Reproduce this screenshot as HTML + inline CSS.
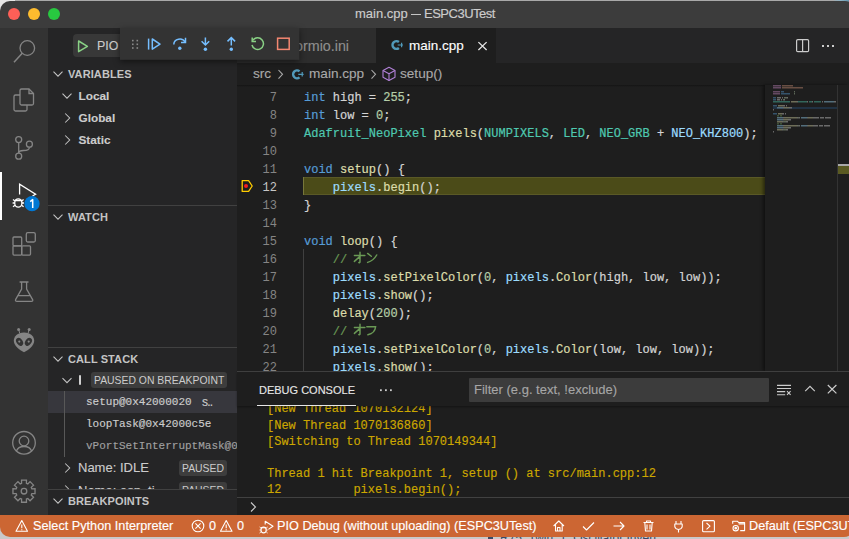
<!DOCTYPE html><html><head><meta charset="utf-8"><style>
*{margin:0;padding:0;box-sizing:border-box}
html,body{width:849px;height:539px;overflow:hidden;background:#c9c9c9;font-family:"Liberation Sans",sans-serif;position:relative}
div{position:absolute;white-space:pre}
span{white-space:pre}
.mono{font-family:"Liberation Mono",monospace}
.tl{top:8px;width:12px;height:12px;border-radius:50%}
.sh{left:48px;width:189px;height:22px;color:#c4c4c4;font-weight:bold;font-size:11px;line-height:22px;padding-left:20px;letter-spacing:0.1px}
.sep{left:48px;width:189px;height:1px;background:#414141}
.row{height:22px;color:#cccccc;font-size:13px;line-height:22px;-webkit-text-stroke:0.12px currentColor}
.mono{-webkit-text-stroke:0.15px currentColor}
.code{left:304px;height:18px;font-family:"Liberation Mono",monospace;font-size:12px;line-height:18px;color:#d4d4d4;-webkit-text-stroke:0.2px currentColor}
.ln{left:237px;width:40px;text-align:right;height:18px;font-family:"Liberation Mono",monospace;font-size:12px;line-height:18px;color:#858585}
.k{color:#569cd6}.n{color:#b5cea8}.t{color:#4ec9b0}.f{color:#dcdcaa}.v{color:#9cdcfe}.c{color:#6a9955}
.cl{left:267px;height:16px;font-family:"Liberation Mono",monospace;font-size:12px;line-height:16px;color:#cca700;-webkit-text-stroke:0.15px currentColor}
.si{top:515px;height:22px;line-height:22px;color:#fff;font-size:12.7px;-webkit-text-stroke:0.15px currentColor}
.badge{height:16px;border-radius:3px;background:#3d3d3d;color:#cccccc;font-size:10.4px;line-height:17.5px;padding:0 3px}
svg{position:absolute;left:0;top:0}
</style></head><body>
<div style="left:0;top:0;width:849px;height:2px;background:#a9a9a9"></div>
<div style="left:834px;top:0;width:15px;height:15px;background:linear-gradient(225deg,#5f93ad 0,#8fb3c4 30%,#a9a9a9 60%)"></div>
<div style="left:0;top:0;width:15px;height:15px;background:#e6e6e6"></div>
<div style="left:0;top:1px;width:855px;height:27px;background:#3c3c3c;border-radius:10px 10px 0 0"></div>
<div class="tl" style="left:8px;background:#fe5f57"></div><div class="tl" style="left:28px;background:#febc2e"></div><div class="tl" style="left:48px;background:#28c840"></div>
<div style="left:355px;top:6px;color:#cccccc;font-size:13px;line-height:15px;-webkit-text-stroke:0.15px currentColor">main.cpp</div>
<div style="left:411px;top:13.6px;width:9.6px;height:1.1px;background:#c4c4c4"></div>
<div style="left:424px;top:6px;color:#cccccc;font-size:13px;line-height:15px;letter-spacing:-0.5px;-webkit-text-stroke:0.15px currentColor">ESPC3UTest</div>
<div style="left:0;top:28px;width:48px;height:487px;background:#333333"></div>
<div style="left:0;top:172px;width:2px;height:48px;background:#ffffff"></div>
<div style="left:48px;top:28px;width:189px;height:487px;background:#252526"></div>
<div style="left:73px;top:34px;width:160px;height:23px;border-radius:4px;background:#383838"></div>
<div class="row" style="left:97px;top:35px;font-size:12.4px">PIO Debug</div>
<div class="sh" style="top:63px">VARIABLES</div>
<div class="row" style="top:85.2px;left:78.5px;font-weight:bold;font-size:11.8px">Local</div>
<div class="row" style="top:107.2px;left:78.5px;font-weight:bold;font-size:11.8px">Global</div>
<div class="row" style="top:129.2px;left:78.5px;font-weight:bold;font-size:11.8px">Static</div>
<div class="sep" style="top:205px"></div>
<div class="sh" style="top:206px">WATCH</div>
<div class="sep" style="top:347px"></div>
<div class="sh" style="top:348px">CALL STACK</div>
<div style="top:375.4px;left:79px;width:2px;height:9.4px;background:#d0d0d0;border-radius:1px"></div>
<div class="badge" style="left:91px;top:372px">PAUSED ON BREAKPOINT</div>
<div style="left:48px;top:391px;width:189px;height:22px;background:#37373d"></div>
<div style="left:64px;top:391px;width:1px;height:66px;background:#585858"></div>
<div class="row mono" style="top:391px;left:86px;font-size:11px">setup@0x42000020</div>
<div class="row" style="top:391px;left:202px;font-size:12px;letter-spacing:-0.8px">s..</div>
<div class="row mono" style="top:413px;left:86px;font-size:11px">loopTask@0x42000c5e</div>
<div style="left:48px;top:435px;width:189px;height:22px;overflow:hidden"><div class="row mono" style="top:0;left:38px;font-size:11px;color:#a0a0a0">vPortSetInterruptMask@0x4</div></div>
<div class="row" style="top:457px;left:78px">Name: IDLE</div>
<div class="badge" style="left:179px;top:460px">PAUSED</div>
<div class="row" style="top:480px;left:78px">Name: esp_ti..</div>
<div class="badge" style="left:179px;top:482px">PAUSED</div>
<div style="left:48px;top:489px;width:189px;height:26px;background:#252526"></div>
<div class="sep" style="top:489px"></div>
<div class="sh" style="top:490px">BREAKPOINTS</div>
<div style="left:237px;top:28px;width:612px;height:343px;background:#1e1e1e"></div>
<div style="left:237px;top:28px;width:612px;height:35px;background:#252526"></div>
<div style="left:237px;top:28px;width:139px;height:35px;background:#2d2d2d"></div>
<div class="row" style="left:268px;top:34.5px;color:#8f8f8f;font-size:14.3px">platformio.ini</div>
<div style="left:376px;top:28px;width:120px;height:35px;background:#1e1e1e"></div>
<div class="row" style="left:409px;top:35px;color:#ffffff;font-size:13.5px">main.cpp</div>
<div class="row" style="left:253px;top:63px;color:#a9a9a9;font-size:13.6px">src</div>
<div class="row" style="left:309px;top:63px;color:#a9a9a9;font-size:13.6px">main.cpp</div>
<div class="row" style="left:400px;top:63px;color:#a9a9a9;font-size:13.6px">setup()</div>
<div style="left:237px;top:85px;width:612px;height:2px;background:linear-gradient(#141414,#1e1e1e)"></div>
<div style="left:303px;top:177px;width:462px;height:18px;background:#4b4b18;border-top:1px solid #5a5926;border-bottom:1px solid #5a5926"></div>
<div style="left:303px;top:177px;width:1px;height:18px;background:#77773a"></div>
<div style="left:303px;top:249px;width:1px;height:122px;background:#404040"></div>
<div style="left:237px;top:85px;width:528px;height:286px;overflow:hidden">
<div class="ln" style="left:0;top:4px">7</div>
<div class="code" style="left:67px;top:4px"><span class="k">int</span> high = <span class="n">255</span>;</div>
<div class="ln" style="left:0;top:22px">8</div>
<div class="code" style="left:67px;top:22px"><span class="k">int</span> low = <span class="n">0</span>;</div>
<div class="ln" style="left:0;top:40px">9</div>
<div class="code" style="left:67px;top:40px"><span class="t">Adafruit_NeoPixel</span> <span class="f">pixels</span>(<span class="t">NUMPIXELS</span>, <span class="t">LED</span>, <span class="t">NEO_GRB</span> + <span class="v">NEO_KHZ800</span>);</div>
<div class="ln" style="left:0;top:58px">10</div>
<div class="ln" style="left:0;top:76px">11</div>
<div class="code" style="left:67px;top:76px"><span class="k">void</span> <span class="f">setup</span>() {</div>
<div class="ln" style="left:0;top:94px;color:#c6c6c6">12</div>
<div class="code" style="left:67px;top:94px">    <span class="v">pixels</span>.<span class="f">begin</span>();</div>
<div class="ln" style="left:0;top:112px">13</div>
<div class="code" style="left:67px;top:112px">}</div>
<div class="ln" style="left:0;top:130px">14</div>
<div class="ln" style="left:0;top:148px">15</div>
<div class="code" style="left:67px;top:148px"><span class="k">void</span> <span class="f">loop</span>() {</div>
<div class="ln" style="left:0;top:166px">16</div>
<div class="code" style="left:67px;top:166px">    <span class="c">//</span></div>
<div class="ln" style="left:0;top:184px">17</div>
<div class="code" style="left:67px;top:184px">    <span class="v">pixels</span>.<span class="f">setPixelColor</span>(<span class="n">0</span>, <span class="v">pixels</span>.<span class="f">Color</span>(high, low, low));</div>
<div class="ln" style="left:0;top:202px">18</div>
<div class="code" style="left:67px;top:202px">    <span class="v">pixels</span>.<span class="f">show</span>();</div>
<div class="ln" style="left:0;top:220px">19</div>
<div class="code" style="left:67px;top:220px">    <span class="f">delay</span>(<span class="n">200</span>);</div>
<div class="ln" style="left:0;top:238px">20</div>
<div class="code" style="left:67px;top:238px">    <span class="c">//</span></div>
<div class="ln" style="left:0;top:256px">21</div>
<div class="code" style="left:67px;top:256px">    <span class="v">pixels</span>.<span class="f">setPixelColor</span>(<span class="n">0</span>, <span class="v">pixels</span>.<span class="f">Color</span>(low, low, low));</div>
<div class="ln" style="left:0;top:274px">22</div>
<div class="code" style="left:67px;top:274px">    <span class="v">pixels</span>.<span class="f">show</span>();</div>
</div>
<div style="left:765px;top:85px;width:84px;height:286px;background:#1e1e1e;box-shadow:-2px 0 3px rgba(0,0,0,.45)"></div>
<div style="left:837px;top:85px;width:1px;height:286px;background:#333333"></div>
<div style="left:838px;top:164px;width:11px;height:2px;background:#a8a8a8"></div>
<div style="left:838px;top:166px;width:11px;height:8px;background:#5a5a22"></div>
<div style="left:237px;top:371px;width:612px;height:144px;background:#1e1e1e"></div>
<div style="left:237px;top:371px;width:612px;height:1px;background:#414141"></div>
<div class="cl" style="top:401px">[New Thread 1070132124]</div>
<div class="cl" style="top:418px">[New Thread 1070136860]</div>
<div class="cl" style="top:434px">[Switching to Thread 1070149344]</div>
<div class="cl" style="top:466px">Thread 1 hit Breakpoint 1, setup () at src/main.cpp:12</div>
<div class="cl" style="top:482px">12          pixels.begin();</div>
<div style="left:237px;top:372px;width:612px;height:34px;background:#1e1e1e;box-shadow:0 1px 2px rgba(0,0,0,.35)"></div>
<div class="row" style="left:259px;top:379px;font-size:11px;color:#e7e7e7">DEBUG CONSOLE</div>
<div style="left:257px;top:405px;width:99px;height:1px;background:#e7e7e7"></div>
<div style="left:469px;top:378px;width:300px;height:24px;background:#3c3c3c;border-radius:1px"></div>
<div class="row" style="left:474px;top:379px;color:#a6a6a6">Filter (e.g. text, !exclude)</div>
<div style="left:237px;top:497px;width:612px;height:1px;background:#414141"></div>
<div style="left:486px;top:531px;width:200px;height:8px;overflow:hidden"><div style="left:2px;top:5px;width:5px;height:5px;background:#3a4a66"></div><div style="left:14px;top:0;color:#3a4a66;font-size:12px;line-height:14px">R75  Twin  1  Oscillator Invert</div></div>
<div style="left:0;top:515px;width:854px;height:22px;background:#cc6633;border-radius:0 0 10px 10px"></div>
<div class="si" style="left:33px">Select Python Interpreter</div>
<div class="si" style="left:209px">0</div>
<div class="si" style="left:237px">0</div>
<div class="si" style="left:277px">PIO Debug (without uploading) (ESPC3UTest)</div>
<div class="si" style="left:749px">Default (ESPC3UTest)</div>
<svg width="849" height="539" viewBox="0 0 849 539"><g fill="none" stroke="#858585" stroke-width="1.3"><circle cx="27.3" cy="48" r="7.3"/><line x1="22.2" y1="53.3" x2="14" y2="62.3" stroke-width="1.5"/><path d="M20 90.5 Q20 89 21.5 89 H29 L33.5 93.5 V103.5 Q33.5 105 32 105 H21.5 Q20 105 20 103.5 Z"/><path d="M29 89 V93.5 H33.5"/><path d="M20 95 H15.5 Q14 95 14 96.5 V109.5 Q14 111 15.5 111 H25.5 Q27 111 27 109.5 V105"/><circle cx="18.7" cy="139.6" r="3"/><circle cx="18.7" cy="156.2" r="3"/><circle cx="29.4" cy="144.2" r="3"/><path d="M18.7 142.6 V153.2"/><path d="M29.4 147.2 C29.4 150 27 150.5 23.5 150.5 C20.5 150.5 18.7 151.5 18.7 153"/><rect x="13" y="237" width="8.7" height="8.8" rx="1"/><rect x="13" y="245.8" width="8.7" height="9.3" rx="1"/><rect x="21.7" y="245.8" width="8.8" height="9.3" rx="1"/><rect x="26.3" y="232.7" width="9" height="9.3" rx="1.5"/><path d="M19.6 282 H28.5 M21.6 282 V289 L15.6 299.6 Q15 301.4 17 301.4 H31.4 Q33.3 301.4 32.6 299.6 L26.6 289 V282 M17.8 295.6 H30.4"/><circle cx="24" cy="442.8" r="11.3"/><circle cx="24" cy="441" r="4.8"/><path d="M16.3 451.3 C17.5 447.8 20.5 446.5 24 446.5 C27.5 446.5 30.5 447.8 31.7 451.3"/><path d="M31.83 488.78 L35.03 488.73 L35.03 493.67 L31.83 493.62 L31.25 495.03 L33.54 497.25 L30.05 500.74 L27.83 498.45 L26.42 499.03 L26.47 502.23 L21.53 502.23 L21.58 499.03 L20.17 498.45 L17.95 500.74 L14.46 497.25 L16.75 495.03 L16.17 493.62 L12.97 493.67 L12.97 488.73 L16.17 488.78 L16.75 487.37 L14.46 485.15 L17.95 481.66 L20.17 483.95 L21.58 483.37 L21.53 480.17 L26.47 480.17 L26.42 483.37 L27.83 483.95 L30.05 481.66 L33.54 485.15 L31.25 487.37 Z"/><circle cx="24" cy="491.2" r="2.8"/></g><g fill="#858585"><path d="M24 332.4 C30.5 332.4 34.2 336.2 34.2 340.8 C34.2 345.8 28.5 350 24 352.2 C19.5 350 13.8 345.8 13.8 340.8 C13.8 336.2 17.5 332.4 24 332.4 Z"/><circle cx="18.6" cy="329.4" r="1.5"/><circle cx="29.2" cy="329.4" r="1.5"/></g><g stroke="#858585" stroke-width="1"><line x1="18.8" y1="330" x2="19.8" y2="333.5"/><line x1="29" y1="330" x2="28" y2="333.5"/></g><g fill="#333333"><ellipse cx="19.6" cy="341.8" rx="3" ry="4.4" transform="rotate(-35 19.6 341.8)"/><ellipse cx="28.4" cy="341.8" rx="3" ry="4.4" transform="rotate(35 28.4 341.8)"/></g><g fill="#858585"><circle cx="19.3" cy="341.6" r="1.1"/><circle cx="28.7" cy="341.6" r="1.1"/></g><g fill="none" stroke="#ffffff" stroke-width="1.3"><path d="M19.6 194.5 V184.2 L35.6 194.2 L32.5 196"/><ellipse cx="18.3" cy="203" rx="3.6" ry="4.2"/><path d="M15 200.5 H21.6 M13 199.5 L15 201 M23.6 199.5 L21.6 201 M12.6 203 H14.7 M21.9 203 H24 M13 206.8 L15 205.2 M23.6 206.8 L21.6 205.2"/></g><circle cx="32" cy="203.7" r="7.6" fill="#0078d4"/><path d="M30.2 201.6 L32.7 199.6 V208" fill="none" stroke="#fff" stroke-width="1.5" stroke-linejoin="round"/><polyline points="53.5 71.7 58.0 76.2 62.5 71.7" fill="none" stroke="#c5c5c5" stroke-width="1.05"/><polyline points="53.5 214.7 58.0 219.2 62.5 214.7" fill="none" stroke="#c5c5c5" stroke-width="1.05"/><polyline points="53.5 356.7 58.0 361.2 62.5 356.7" fill="none" stroke="#c5c5c5" stroke-width="1.05"/><polyline points="53.5 498.7 58.0 503.2 62.5 498.7" fill="none" stroke="#c5c5c5" stroke-width="1.05"/><polyline points="62.5 93.7 67.0 98.2 71.5 93.7" fill="none" stroke="#c5c5c5" stroke-width="1.05"/><polyline points="65.2 113.5 69.7 118.0 65.2 122.5" fill="none" stroke="#c5c5c5" stroke-width="1.05"/><polyline points="65.2 135.5 69.7 140.0 65.2 144.5" fill="none" stroke="#c5c5c5" stroke-width="1.05"/><polyline points="62.5 378.2 67.0 382.7 71.5 378.2" fill="none" stroke="#c5c5c5" stroke-width="1.05"/><polyline points="65.2 463.5 69.7 468.0 65.2 472.5" fill="none" stroke="#c5c5c5" stroke-width="1.05"/><polyline points="65.2 485.5 68.7 489" fill="none" stroke="#c5c5c5" stroke-width="1.05"/><path d="M78.6 41 L87.4 46.3 L78.6 51.6 Z" fill="none" stroke="#89d185" stroke-width="1.5" stroke-linejoin="round"/><rect x="120" y="28" width="179.3" height="31.8" fill="#333333" style="filter:drop-shadow(0 2px 3px rgba(0,0,0,.5))"/><g fill="#8a8a8a"><rect x="132.0" y="39.8" width="1.6" height="1.6"/><rect x="132.0" y="43.5" width="1.6" height="1.6"/><rect x="132.0" y="47.2" width="1.6" height="1.6"/><rect x="136.5" y="39.8" width="1.6" height="1.6"/><rect x="136.5" y="43.5" width="1.6" height="1.6"/><rect x="136.5" y="47.2" width="1.6" height="1.6"/></g><g fill="none" stroke="#75beff" stroke-width="1.5"><path d="M148.6 38.6 V49.6"/><path d="M152.3 39 L160 44.1 L152.3 49.2 Z" stroke-linejoin="round"/><path d="M173.8 44.5 A6 5.5 0 0 1 185.2 42.2"/><path d="M185.5 37.8 V42.6 H181"/><path d="M205.4 37.6 V44.6 M201.6 41.2 L205.4 45 L209.2 41.2"/><path d="M231.3 45.4 V38 M227.5 41.4 L231.3 37.6 L235.1 41.4"/></g><g fill="#75beff"><circle cx="179.8" cy="48.2" r="1.7"/><circle cx="205.4" cy="49.2" r="1.7"/><circle cx="231.3" cy="49.2" r="1.7"/></g><path d="M253 40.2 A5.8 5.8 0 1 1 252 45" fill="none" stroke="#89d185" stroke-width="1.5"/><path d="M252.2 37.6 V41.4 H256" fill="none" stroke="#89d185" stroke-width="1.5"/><rect x="277.6" y="38.2" width="11.6" height="11.2" fill="none" stroke="#f48771" stroke-width="1.5"/><g transform="translate(396.4 45.0)"><path d="M2.5 -3 A3.9 3.9 0 1 0 2.5 3" fill="none" stroke="#519aba" stroke-width="2.4"/><path d="M1.3 0 H6.6 M5.2 -2.3 V2.3" stroke="#519aba" stroke-width="1.2"/></g><path d="M478.4 42.1 L486.6 50 M486.6 42.1 L478.4 50" stroke="#e6e6e6" stroke-width="1.3"/><rect x="796.6" y="39.6" width="12" height="12" rx="1.2" fill="none" stroke="#cccccc" stroke-width="1.2"/><line x1="802.6" y1="39.6" x2="802.6" y2="51.6" stroke="#cccccc" stroke-width="1.2"/><g fill="#cccccc"><rect x="822" y="45" width="2" height="2"/><rect x="827" y="45" width="2" height="2"/><rect x="832" y="45" width="2" height="2"/></g><polyline points="278.5 70 282.5 74.3 278.5 78.6" fill="none" stroke="#a9a9a9" stroke-width="1.1"/><g transform="translate(297.0 74.3)"><path d="M2.5 -3 A3.9 3.9 0 1 0 2.5 3" fill="none" stroke="#519aba" stroke-width="2.4"/><path d="M1.3 0 H6.6 M5.2 -2.3 V2.3" stroke="#519aba" stroke-width="1.2"/></g><polyline points="371.5 70 375.5 74.3 371.5 78.6" fill="none" stroke="#a9a9a9" stroke-width="1.1"/><g fill="none" stroke="#b180d7" stroke-width="1.1" stroke-linejoin="round"><path d="M389 67.3 L395 70.5 V77.3 L389 80.4 L383 77.3 V70.5 Z"/><path d="M383 70.5 L389 73.7 L395 70.5 M389 73.7 V80.4"/></g><path d="M242.2 180.6 H248.6 L252.2 186 L248.6 191.4 H242.2 Z" fill="none" stroke="#ffcc00" stroke-width="1.3" stroke-linejoin="round"/><circle cx="246" cy="186" r="2" fill="#f51d1d"/><path d="M354.4 255.4 H364.9 M360 252.3 V262.1 Q360 263.0 358.8 262.5 M359.7 256.6 L354.4 261.4 M367.6 253.4 L371.3 256.3 M367.6 262.4 Q373.6 260.6 376.7 255.0" fill="none" stroke="#6a9955" stroke-width="1.45" stroke-linecap="round"/><path d="M354.4 327.4 H364.9 M360 324.3 V334.1 Q360 335.0 358.8 334.5 M359.7 328.6 L354.4 333.4 M366.8 326.8 H375.6 Q375 333.2 367.9 334.8" fill="none" stroke="#6a9955" stroke-width="1.45" stroke-linecap="round"/><g opacity="0.42"><rect x="773" y="107" width="64" height="2" fill="#264f78"/><rect x="773" y="85" width="8" height="1.5" fill="#c586c0"/><rect x="782" y="85" width="11" height="1.5" fill="#ce9178"/><rect x="773" y="87" width="8" height="1.5" fill="#c586c0"/><rect x="782" y="87" width="21" height="1.5" fill="#ce9178"/><rect x="773" y="91" width="7" height="1.5" fill="#c586c0"/><rect x="781" y="91" width="3" height="1.5" fill="#569cd6"/><rect x="794" y="91" width="1" height="1.5" fill="#b5cea8"/><rect x="773" y="93" width="7" height="1.5" fill="#c586c0"/><rect x="781" y="93" width="9" height="1.5" fill="#569cd6"/><rect x="794" y="93" width="1" height="1.5" fill="#b5cea8"/><rect x="773" y="97" width="3" height="1.5" fill="#569cd6"/><rect x="777" y="97" width="4" height="1.5" fill="#d4d4d4"/><rect x="782" y="97" width="1" height="1.5" fill="#d4d4d4"/><rect x="784" y="97" width="3" height="1.5" fill="#b5cea8"/><rect x="787" y="97" width="1" height="1.5" fill="#d4d4d4"/><rect x="773" y="99" width="3" height="1.5" fill="#569cd6"/><rect x="777" y="99" width="3" height="1.5" fill="#d4d4d4"/><rect x="781" y="99" width="1" height="1.5" fill="#d4d4d4"/><rect x="783" y="99" width="1" height="1.5" fill="#b5cea8"/><rect x="784" y="99" width="1" height="1.5" fill="#d4d4d4"/><rect x="773" y="101" width="17" height="1.5" fill="#4ec9b0"/><rect x="791" y="101" width="6" height="1.5" fill="#dcdcaa"/><rect x="797" y="101" width="1" height="1.5" fill="#d4d4d4"/><rect x="798" y="101" width="9" height="1.5" fill="#4ec9b0"/><rect x="807" y="101" width="1" height="1.5" fill="#d4d4d4"/><rect x="809" y="101" width="3" height="1.5" fill="#4ec9b0"/><rect x="812" y="101" width="1" height="1.5" fill="#d4d4d4"/><rect x="814" y="101" width="7" height="1.5" fill="#4ec9b0"/><rect x="822" y="101" width="1" height="1.5" fill="#d4d4d4"/><rect x="824" y="101" width="10" height="1.5" fill="#9cdcfe"/><rect x="834" y="101" width="2" height="1.5" fill="#d4d4d4"/><rect x="773" y="105" width="4" height="1.5" fill="#569cd6"/><rect x="778" y="105" width="5" height="1.5" fill="#dcdcaa"/><rect x="783" y="105" width="2" height="1.5" fill="#d4d4d4"/><rect x="786" y="105" width="1" height="1.5" fill="#d4d4d4"/><rect x="777" y="107" width="6" height="1.5" fill="#9cdcfe"/><rect x="783" y="107" width="1" height="1.5" fill="#d4d4d4"/><rect x="784" y="107" width="5" height="1.5" fill="#dcdcaa"/><rect x="789" y="107" width="3" height="1.5" fill="#d4d4d4"/><rect x="773" y="109" width="1" height="1.5" fill="#d4d4d4"/><rect x="773" y="113" width="4" height="1.5" fill="#569cd6"/><rect x="778" y="113" width="4" height="1.5" fill="#dcdcaa"/><rect x="782" y="113" width="2" height="1.5" fill="#d4d4d4"/><rect x="785" y="113" width="1" height="1.5" fill="#d4d4d4"/><rect x="777" y="115" width="2" height="1.5" fill="#6a9955"/><rect x="780" y="115" width="2" height="1.5" fill="#6a9955"/><rect x="777" y="117" width="6" height="1.5" fill="#9cdcfe"/><rect x="783" y="117" width="1" height="1.5" fill="#d4d4d4"/><rect x="784" y="117" width="13" height="1.5" fill="#dcdcaa"/><rect x="797" y="117" width="1" height="1.5" fill="#d4d4d4"/><rect x="798" y="117" width="1" height="1.5" fill="#b5cea8"/><rect x="799" y="117" width="1" height="1.5" fill="#d4d4d4"/><rect x="801" y="117" width="6" height="1.5" fill="#9cdcfe"/><rect x="807" y="117" width="1" height="1.5" fill="#d4d4d4"/><rect x="808" y="117" width="5" height="1.5" fill="#dcdcaa"/><rect x="813" y="117" width="6" height="1.5" fill="#d4d4d4"/><rect x="820" y="117" width="4" height="1.5" fill="#d4d4d4"/><rect x="825" y="117" width="6" height="1.5" fill="#d4d4d4"/><rect x="777" y="119" width="6" height="1.5" fill="#9cdcfe"/><rect x="783" y="119" width="1" height="1.5" fill="#d4d4d4"/><rect x="784" y="119" width="4" height="1.5" fill="#dcdcaa"/><rect x="788" y="119" width="3" height="1.5" fill="#d4d4d4"/><rect x="777" y="121" width="5" height="1.5" fill="#dcdcaa"/><rect x="782" y="121" width="1" height="1.5" fill="#d4d4d4"/><rect x="783" y="121" width="3" height="1.5" fill="#b5cea8"/><rect x="786" y="121" width="2" height="1.5" fill="#d4d4d4"/><rect x="777" y="123" width="2" height="1.5" fill="#6a9955"/><rect x="780" y="123" width="2" height="1.5" fill="#6a9955"/><rect x="777" y="125" width="6" height="1.5" fill="#9cdcfe"/><rect x="783" y="125" width="1" height="1.5" fill="#d4d4d4"/><rect x="784" y="125" width="13" height="1.5" fill="#dcdcaa"/><rect x="797" y="125" width="1" height="1.5" fill="#d4d4d4"/><rect x="798" y="125" width="1" height="1.5" fill="#b5cea8"/><rect x="799" y="125" width="1" height="1.5" fill="#d4d4d4"/><rect x="801" y="125" width="6" height="1.5" fill="#9cdcfe"/><rect x="807" y="125" width="1" height="1.5" fill="#d4d4d4"/><rect x="808" y="125" width="5" height="1.5" fill="#dcdcaa"/><rect x="813" y="125" width="5" height="1.5" fill="#d4d4d4"/><rect x="819" y="125" width="4" height="1.5" fill="#d4d4d4"/><rect x="824" y="125" width="6" height="1.5" fill="#d4d4d4"/><rect x="777" y="127" width="6" height="1.5" fill="#9cdcfe"/><rect x="783" y="127" width="1" height="1.5" fill="#d4d4d4"/><rect x="784" y="127" width="4" height="1.5" fill="#dcdcaa"/><rect x="788" y="127" width="3" height="1.5" fill="#d4d4d4"/><rect x="777" y="129" width="5" height="1.5" fill="#dcdcaa"/><rect x="782" y="129" width="1" height="1.5" fill="#d4d4d4"/><rect x="783" y="129" width="3" height="1.5" fill="#b5cea8"/><rect x="786" y="129" width="2" height="1.5" fill="#d4d4d4"/><rect x="773" y="131" width="1" height="1.5" fill="#d4d4d4"/></g><g fill="#cccccc"><rect x="380" y="389.3" width="1.8" height="1.8"/><rect x="385" y="389.3" width="1.8" height="1.8"/><rect x="390" y="389.3" width="1.8" height="1.8"/></g><g fill="none" stroke="#cccccc" stroke-width="1.1"><path d="M777 385.4 H791 M777 388.5 H791 M777 391.6 H785.2 M777 394.7 H785.2"/><path d="M787 391.2 L790.6 394.8 M790.6 391.2 L787 394.8"/><polyline points="805.2 391.2 810 386.3 814.8 391.2"/><path d="M827.8 385 L836.4 393.4 M836.4 385 L827.8 393.4" stroke-width="1.2"/><polyline points="251 502.5 255.5 507 251 511.5"/></g><g fill="none" stroke="#ffffff" stroke-width="1.1" stroke-linejoin="round"><path d="M21.8 520.5 L27.5 531.2 H16.0 Z M21.8 524.5 V528.2 M21.8 529.2 V530.2"/><path d="M226.2 520.5 L232.0 531.2 H220.5 Z M226.2 524.5 V528.2 M226.2 529.2 V530.2"/><circle cx="198" cy="526" r="5.8"/><path d="M195.4 523.4 L200.6 528.6 M200.6 523.4 L195.4 528.6"/><path d="M265.2 524.6 V521.3 L273 526.3 L268.4 529.4"/><ellipse cx="263.6" cy="530" rx="2.6" ry="2.9"/><path d="M261 527.8 H266.2 M259.6 527 L261 528.2 M267.6 527 L266.2 528.2 M259.5 530 H261 M266.2 530 H267.7 M259.6 533 L261 531.8 M267.6 533 L266.2 531.8" stroke-width="0.9"/><path d="M553.6 526 L558.8 521 L564 526 M555.5 524.5 V531 H562.2 V524.5 M557.5 531 V527.5 H560 V531"/><path d="M583 526.5 L586.5 530 L594 522.5"/><path d="M613.5 526 H624 M620 522 L624 526 L620 530"/><path d="M643.5 522.5 H653.5 M646.5 522.5 V521 H650.5 V522.5 M644.8 522.5 L645.5 531 H651.5 L652.2 522.5 M647 524.5 V529.5 M650 524.5 V529.5"/><path d="M676 521 V524 M681 521 V524 M674.8 524 H682.2 V526.5 Q682 529 678.5 529.5 Q675 529 674.8 526.5 Z M678.5 529.5 V532.5"/><rect x="702.6" y="520.6" width="11.8" height="11.2" rx="1"/><polyline points="706.5 523 710 526.2 706.5 529.4"/><path d="M732.7 523.8 V521.3 H737.6 L738.6 522.5 H744.6 V530.6 H740.2 M738.6 523.9 H744.6"/><circle cx="735.7" cy="528.2" r="2.7"/><circle cx="735.7" cy="528.2" r="0.8" fill="#fff"/></g></svg>
</body></html>
